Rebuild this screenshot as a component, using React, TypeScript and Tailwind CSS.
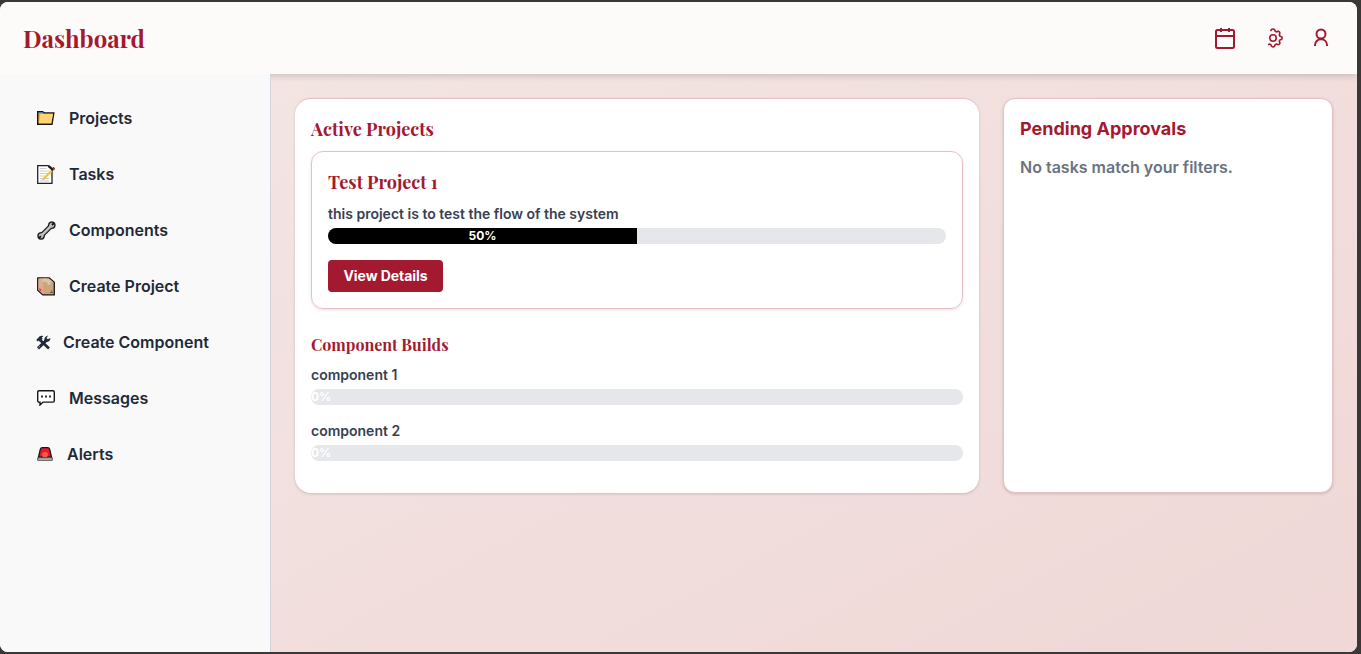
import React from "react";

const FolderIcon = () => (
  <svg width="18" height="14" viewBox="0 0 18 14" className="block">
    <path d="M.7.8h5l1.3 1.1h9.8L15 13.3H.7z" fill="#e7a82c" stroke="#161616" strokeWidth="1.4" />
    <path d="M2 1h3.4l1 1.2H2z" fill="#3f83b8" />
    <path d="M3.3 3h12.7l-1.7 9.3H1.9z" fill="#ffd574" />
  </svg>
);

const NoteIcon = () => (
  <svg width="19" height="19" viewBox="0 0 19 19" className="block">
    <path d="M.7.7h10.5l3.8 3.6v14H.7z" fill="#fff" stroke="#222" strokeWidth="1.3" />
    <path d="M2.7 3.5h7M2.7 6h9.6M2.7 8.5h8.5M2.7 11h7M2.7 13.5h9.6M2.7 16h9.6" stroke="#cfcfcf" />
    <path d="m5.7 14.7 10-10" stroke="#f5bd3b" strokeWidth="2" />
    <path d="m14.3 5.2 3.2-2.2M11.6 1.2l3.6 3" stroke="#25191b" strokeWidth="2.4" />
    <path d="m15.9 4.4 1.5-1.2" stroke="#b64c57" strokeWidth="1.3" />
  </svg>
);

const WrenchIcon = () => (
  <svg width="19" height="19" viewBox="0 0 19 19" className="block">
    <g stroke="#151515" fill="#151515">
      <path d="M4.5 14.5 14.5 4.5" strokeWidth="4.8" />
      <circle cx="14.8" cy="4.2" r="3.6" strokeWidth=".4" />
      <circle cx="4.1" cy="14.9" r="3.6" strokeWidth=".4" />
    </g>
    <g stroke="#bfbfc2" fill="#bfbfc2">
      <path d="M4.5 14.5 14.5 4.5" strokeWidth="2.5" />
      <circle cx="14.8" cy="4.2" r="2.3" strokeWidth=".4" />
      <circle cx="4.1" cy="14.9" r="2.3" strokeWidth=".4" />
    </g>
    <path d="m15 4 1.7-1.7M3.9 15.1l-1.7 1.7" stroke="#151515" strokeWidth="1.8" />
  </svg>
);

const BoxIcon = () => (
  <svg width="18" height="19" viewBox="0 0 18 19" className="block">
    <path d="M.7.9h11.6l5 4.3v12.7H6L.7 13.3z" fill="#cda478" stroke="#171717" strokeWidth="1.3" strokeLinejoin="round" />
    <path d="M1.4 1.5 6 5.3v12L1.4 13z" fill="#d9ad91" />
    <path d="M1.9 1.6h10.1l4.4 3.6H6.3z" fill="#e0bd94" />
    <path d="M6 1.6h3.3l4.2 3.8v2.3h-3V5.3z" fill="#c9c9ca" />
    <path d="M2.3 11v2.2l2 1.4v-2.3z" fill="#e23c4c" />
    <path d="M13.2 15.5h2.7M14 14h1.5" stroke="#68513c" />
  </svg>
);

const ToolsIcon = () => (
  <svg width="15" height="15" viewBox="0 0 15 15" className="block">
    <path d="M4.6 5.5 13 13.4" stroke="#1f2937" strokeWidth="2.7" />
    <path d="M.3 5 3.4 1.6C4.5.6 6 .7 7.4 1.2L5.7 2.6l1 1.2-3 3-1.2-1.2-1 1z" fill="#1f2937" />
    <path d="m2 13.3 8-7.7" stroke="#1f2937" strokeWidth="3" />
    <path d="M8.5 5.5c-.5-2.3 1.1-4.7 3.5-4.7l-1.5 2.1 1.4 1.4 2.5-1.2c.1 2.6-2 4.2-4.2 4z" fill="#1f2937" />
    <path d="m2.7 12.3 1-.9" stroke="#f9f9f9" strokeWidth=".8" />
  </svg>
);

const MessageIcon = () => (
  <svg width="18" height="16" viewBox="0 0 18 16" className="block">
    <path d="M2 .7h14q1.3 0 1.3 1.3v8.8q0 1.3-1.3 1.3H6.1L3 15v-2.9H2Q.7 12.1.7 10.8V2Q.7.7 2 .7z" fill="#fff" stroke="#171717" strokeWidth="1.4" />
    <path d="M4 5.5h2v2H4zM8 5.5h2v2H8zM12 5.5h2v2h-2z" fill="#333" />
  </svg>
);

const AlarmIcon = () => (
  <svg width="16" height="14" viewBox="0 0 16 14" className="block">
    <path d="m1.5 10.2 1.8-7.8Q3.7.7 5.4.7h5.2q1.7 0 2.1 1.7l1.8 7.8z" fill="#e8172d" stroke="#171717" strokeWidth="1.3" />
    <path d="M5 8q0-3 3-3t3 3l-1 2H6z" fill="#ff5a45" />
    <path d="M.7 10.8h14.6v2.5H.7z" fill="#bfc1c2" stroke="#444" strokeWidth=".9" />
  </svg>
);

const CalendarIcon = () => (
  <svg width="24" height="24" viewBox="0 0 24 24" fill="none" stroke="currentColor" strokeWidth="2" className="block">
    <rect x="3" y="4" width="18" height="18" rx="1.5" />
    <path d="M3 10h18M8 2v4M16 2v4" />
  </svg>
);

const GearIcon = () => (
  <svg width="18" height="22" viewBox="0 0 18 22" fill="none" stroke="currentColor" strokeWidth="1.6" className="block">
    <circle cx="6" cy="11" r="3.2" />
    <path d="M3.5 4.2 4.5 2.5q1.5-1 3 0l.8 1.8 1.3.5 1.8-.6q1.5.5 1.5 1.9l-.6 1.8.5 1.2 1.8.7q1 1.2 0 2.5l-1.8.7-.5 1.2.7 1.8q-.3 1.5-1.7 1.7l-1.9-.6-1.2.5-.8 1.8q-1.3 1-2.7 0l-.9-1.8-1.2-.5-1.6.7" />
  </svg>
);

const UserIcon = () => (
  <svg width="24" height="24" viewBox="0 0 24 24" fill="none" stroke="currentColor" strokeWidth="2" className="block">
    <circle cx="12" cy="8" r="4.5" />
    <path d="M6 20v-1c0-3.3 2.6-5.7 6-5.7s6 2.4 6 5.7v1" />
  </svg>
);

const navItems = [
  { label: "Projects", Icon: FolderIcon, gap: "gap-[14px] pl-px" },
  { label: "Tasks", Icon: NoteIcon, gap: "gap-[13px] pl-px" },
  { label: "Components", Icon: WrenchIcon, gap: "gap-[13px] pl-px" },
  { label: "Create Project", Icon: BoxIcon, gap: "gap-[14px] pl-px" },
  { label: "Create Component", Icon: ToolsIcon, gap: "gap-3" },
  { label: "Messages", Icon: MessageIcon, gap: "gap-[14px] pl-px" },
  { label: "Alerts", Icon: AlarmIcon, gap: "gap-[14px] pl-px" },
];

function ProgressBar({ value }: { value: number }) {
  return (
    <div className="h-4 w-full overflow-hidden rounded-full bg-[#e5e7eb]">
      <div
        className={`flex h-4 items-center bg-black text-xs leading-4 font-bold text-white ${value > 0 ? "justify-center" : "justify-start"}`}
        style={{ width: `${value}%` }}
      >
        {value}%
      </div>
    </div>
  );
}

const serif = "font-['Playfair_Display','Liberation_Serif',serif] font-bold text-[#a31a30]";

export default function App() {
  return (
    <div className="h-[654px] w-[1361px] overflow-hidden bg-[#393837] pt-[2px] pr-1 pb-[2px] font-['Inter',sans-serif]">
      <div className="flex h-[650px] flex-col overflow-hidden rounded-lg bg-[#fdfbf9]">
        <header className="relative z-10 flex h-[72px] shrink-0 items-center justify-between bg-[#fdfbf9] pr-6 pl-[23px] text-[#a31a30] shadow-[0_2px_7px_rgba(0,0,0,0.17)]">
          <h1 className={`${serif} text-2xl`}>Dashboard</h1>
          <div className="flex items-center">
            <CalendarIcon />
            <div className="ml-[30px]"><GearIcon /></div>
            <div className="ml-6"><UserIcon /></div>
          </div>
        </header>
        <div className="flex min-h-0 flex-1">
          <aside className="relative z-20 w-[271px] shrink-0 border-r border-[#d1d5db] bg-[#f9f9f9] px-9 pt-4">
            <nav>
              {navItems.map(({ label, Icon, gap }) => (
                <a key={label} className={`flex h-14 items-center font-semibold text-[#1f2937] ${gap}`}>
                  <Icon />
                  <span>{label}</span>
                </a>
              ))}
            </nav>
          </aside>
          <main className="grid flex-1 grid-cols-[684px_330px] content-start gap-6 bg-linear-to-br from-[#f3e5e2] to-[#efd8d7] p-6">
            <section className="h-[395px] rounded-2xl border-t border-[#e8bfc4] bg-white px-4 pt-4 shadow-[0_1px_3px_rgba(0,0,0,0.16)]">
              <h2 className={`${serif} text-lg leading-7`}>Active Projects</h2>
              <div className="mt-2 h-[158px] rounded-xl border border-[#e8bfc4] px-4 pt-4 shadow-[0_1px_3px_rgba(0,0,0,0.12)]">
                <h3 className={`${serif} text-lg leading-7`}>Test Project 1</h3>
                <p className="mt-2 text-sm leading-5 font-semibold text-[#374151]">this project is to test the flow of the system</p>
                <div className="mt-1"><ProgressBar value={50} /></div>
                <button className="mt-4 block h-8 w-[115px] rounded-sm bg-[#a31a30] text-sm font-bold tracking-[-0.05px] whitespace-nowrap text-white">View Details</button>
              </div>
              <h3 className={`${serif} mt-6 text-base leading-6`}>Component Builds</h3>
              <div className="mt-2">
                <p className="mb-1 text-sm leading-5 font-semibold text-[#374151]">component 1</p>
                <ProgressBar value={0} />
              </div>
              <div className="mt-4">
                <p className="mb-1 text-sm leading-5 font-semibold text-[#374151]">component 2</p>
                <ProgressBar value={0} />
              </div>
            </section>
            <section className="h-[395px] rounded-xl border border-[#e8bfc4] bg-white p-4 shadow-[0_1px_3px_rgba(0,0,0,0.16)]">
              <h2 className="text-lg leading-7 font-bold text-[#a31a30]">Pending Approvals</h2>
              <p className="mt-3 font-semibold text-[#6b7280]">No tasks match your filters.</p>
            </section>
          </main>
        </div>
      </div>
    </div>
  );
}
